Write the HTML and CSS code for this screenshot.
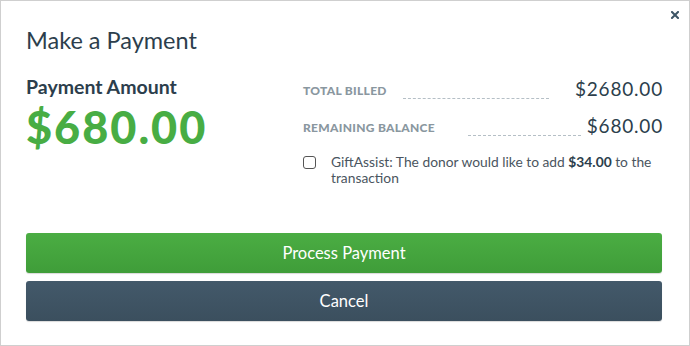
FILE: index.html
```html
<!DOCTYPE html>
<html lang="en">

<head>
	<meta charset="UTF-8">
	<title>Make a Payment</title>
	<link rel="stylesheet" href="styles.css">
</head>

<body>
	<div class="modal">
		<a class="close" href="#">
			<svg width="8" height="8" viewBox="0 0 8 8"><path d="M1 1l6 6M7 1L1 7" stroke="#3d5566" stroke-width="2" stroke-linecap="square"/></svg>
		</a>
		<h2 class="title">Make a Payment</h2>
		<div class="summary">
			<div class="amount">
				<div class="amount-label">Payment Amount</div>
				<div class="amount-value">$680.00</div>
			</div>
			<div class="details">
				<div class="row row-billed">
					<span class="row-label">Total Billed</span>
					<span class="dots"></span>
					<span class="row-value">$2680.00</span>
				</div>
				<div class="row row-balance">
					<span class="row-label">Remaining Balance</span>
					<span class="dots"></span>
					<span class="row-value">$680.00</span>
				</div>
				<label class="assist">
					<span class="box"></span>
					<span class="assist-text">GiftAssist: The donor would like to add <b>$34.00</b> to the transaction</span>
				</label>
			</div>
		</div>
		<div class="actions">
			<button class="btn btn-primary">Process Payment</button>
			<button class="btn btn-cancel">Cancel</button>
		</div>
	</div>
</body>

</html>
```

FILE: styles.css
```css
html,
body {
	margin: 0;
	background: #fff
}

.modal {
	position: relative;
	box-sizing: border-box;
	width: 690px;
	height: 346px;
	border: 1px solid #cfcfcf;
	padding: 0 27px 0 25px;
	font-family: Lato, "Open Sans", sans-serif;
	color: #2c3e4c
}

.close {
	position: absolute;
	top: 10px;
	right: 10px;
	display: block;
	width: 8px;
	height: 8px
}

.close svg {
	display: block
}

.title {
	margin: 0;
	padding-top: 25px;
	font-size: 23.5px;
	font-weight: 400;
	line-height: 28px
}

.summary {
	display: flex;
	margin-top: 22px
}

.amount {
	width: 277px
}

.amount-label {
	font-size: 19.5px;
	font-weight: 700;
	line-height: 22px
}

.amount-value {
	margin-top: 3px;
	font-size: 45px;
	font-weight: 900;
	line-height: 52px;
	color: #48ad44;
	letter-spacing: 2px
}

.details {
	flex: 1
}

.row {
	display: flex;
	align-items: flex-end;
	height: 24px;
	margin-top: 1px
}

.row+.row {
	margin-top: 13px
}

.row-label {
	margin-bottom: 2px;
	font-size: 12px;
	font-weight: 900;
	letter-spacing: .3px;
	text-transform: uppercase;
	color: #8a979f;
	line-height: 16px
}

.dots {
	flex: 1;
	border-bottom: 1px dashed #b5bfc6;
	margin-bottom: 2px
}

.row-billed .dots {
	margin-left: 16px;
	margin-right: 26px
}

.row-balance .dots {
	margin-left: 33px;
	margin-right: 6px
}

.row-value {
	font-size: 19px;
	line-height: 24px;
	letter-spacing: .8px;
	margin-right: -1px;
	color: #2c3e4c
}

.assist {
	display: flex;
	margin-top: 16px;
	font-size: 13.8px;
	line-height: 16px;
	color: #4a5560
}

.box {
	flex: none;
	box-sizing: border-box;
	width: 13px;
	height: 13px;
	margin-top: 2px;
	margin-right: 15px;
	border: 1px solid #555;
	border-radius: 3px;
	background: #fff
}

.assist b {
	color: #2c3e4c
}

.actions {
	display: flex;
	flex-direction: column;
	gap: 8px;
	margin-top: 47px
}

.btn {
	height: 40px;
	border: 0;
	border-radius: 3px;
	font-family: Lato, sans-serif;
	font-size: 16.5px;
	color: #fff;
	box-shadow: 0 1px 1px rgba(0, 0, 0, .15)
}

.btn-primary {
	background: linear-gradient(#4bad43, #3f9d39)
}

.btn-cancel {
	background: linear-gradient(#43596a, #3b4f5e)
}
```
